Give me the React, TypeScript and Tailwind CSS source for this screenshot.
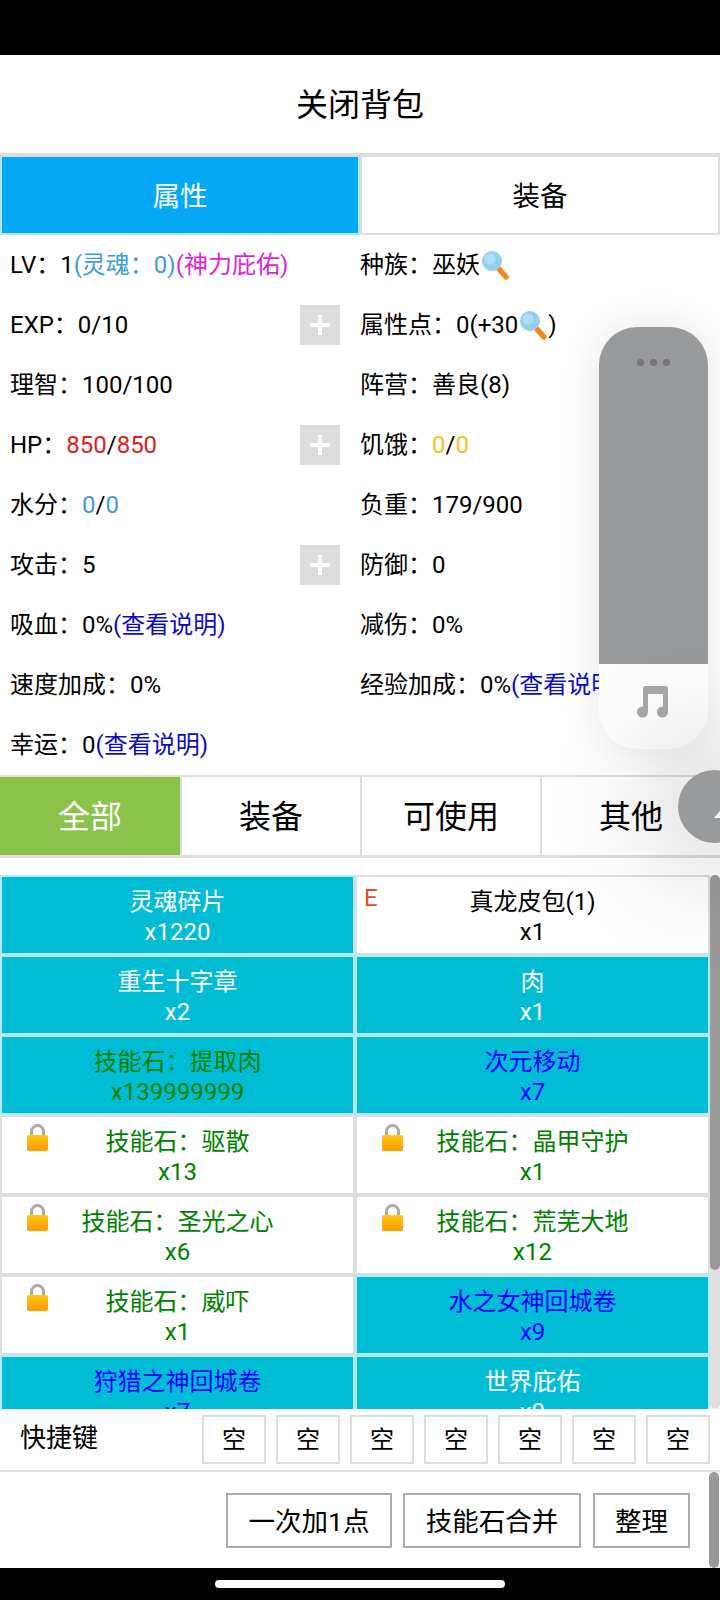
import React from 'react';

const Magnifier: React.FC = () => (
    <svg className="inline-block w-[30px] h-[30px] align-[-7px]" viewBox="0 0 30 30">
        <path d="M19 19l7 8" stroke="#f08a1d" strokeWidth="5.5" strokeLinecap="round" />
        <circle cx="12" cy="11" r="9.5" fill="#8fd0f5" stroke="#a9c6d8" strokeWidth="1" />
        <circle cx="10" cy="9" r="5.5" fill="#b0def9" />
    </svg>
);

const Lock: React.FC = () => (
    <svg className="absolute left-[25px] top-[7px] w-[21px] h-[28px]" viewBox="0 0 21 28">
        <defs>
            <linearGradient id="lockBody" x1="0" y1="0" x2="0" y2="1">
                <stop offset="0" stopColor="#ffc61a" />
                <stop offset="1" stopColor="#fb9b00" />
            </linearGradient>
        </defs>
        <path d="M4.5 13V7.5a6 6 0 0112 0V13" fill="none" stroke="#a9a9b2" strokeWidth="3" />
        <rect x="0" y="11" width="21" height="16" rx="2" fill="url(#lockBody)" />
    </svg>
);

const Plus: React.FC = () => (
    <div className="w-10 h-10 bg-[#dddddd] flex items-center justify-center">
        <svg className="w-5 h-5" viewBox="0 0 20 20">
            <path d="M10 0v20M0 10h20" stroke="#ffffff" strokeWidth="4" />
        </svg>
    </div>
);

// Beamed note from the floating widget
const MusicNote: React.FC = () => (
    <svg className="w-9 h-9" viewBox="0 0 36 36" fill="#a8a8a8">
        <path d="M7 4.5Q7 2 9.5 2H29.5Q32 2 32 4.5V28H27V10H12V28H7Z" />
        <circle cx="6.5" cy="28" r="5.5" />
        <circle cx="26.5" cy="28" r="5.5" />
    </svg>
);

interface StatRowProps {
    left: React.ReactNode;
    right: React.ReactNode;
    plus?: boolean;
}

const StatRow: React.FC<StatRowProps> = ({ left, right, plus }) => (
    <div className="flex h-[60px] items-center text-[24px] leading-[30px]">
        <div className="w-[360px] pl-[10px] pr-5 flex items-center justify-between whitespace-nowrap">
            <span>{left}</span>
            {plus && <Plus />}
        </div>
        <div className="whitespace-nowrap">{right}</div>
    </div>
);

interface ItemProps {
    name: string;
    count: string;
    filled?: boolean;
    color?: string;
    lock?: boolean;
    equip?: boolean;
}

const items: ItemProps[] = [
    { name: '灵魂碎片', count: 'x1220', filled: true, color: 'text-white' },
    { name: '真龙皮包(1)', count: 'x1', color: 'text-black', equip: true },
    { name: '重生十字章', count: 'x2', filled: true, color: 'text-white' },
    { name: '肉', count: 'x1', filled: true, color: 'text-white' },
    { name: '技能石：提取肉', count: 'x139999999', filled: true, color: 'text-[#008000]' },
    { name: '次元移动', count: 'x7', filled: true, color: 'text-[#0000ff]' },
    { name: '技能石：驱散', count: 'x13', color: 'text-[#008000]', lock: true },
    { name: '技能石：晶甲守护', count: 'x1', color: 'text-[#008000]', lock: true },
    { name: '技能石：圣光之心', count: 'x6', color: 'text-[#008000]', lock: true },
    { name: '技能石：荒芜大地', count: 'x12', color: 'text-[#008000]', lock: true },
    { name: '技能石：威吓', count: 'x1', color: 'text-[#008000]', lock: true },
    { name: '水之女神回城卷', count: 'x9', filled: true, color: 'text-[#0000ff]' },
    { name: '狩猎之神回城卷', count: 'x7', filled: true, color: 'text-[#0000ff]' },
    { name: '世界庇佑', count: 'x9', filled: true, color: 'text-white' },
];

const ItemCell: React.FC<ItemProps> = ({ name, count, filled, color, lock, equip }) => (
    <div
        className={`relative h-20 border-2 pt-1 flex flex-col items-center justify-center text-[24px] leading-[30px] ${
            filled ? 'bg-[#00bcd4] border-[#b2ebf2]' : 'bg-white border-[#dddddd]'
        } ${color}`}
    >
        {lock && <Lock />}
        {equip && <span className="absolute left-[7px] top-[6px] text-[#d9532c]">E</span>}
        <div>{name}</div>
        <div>{count}</div>
    </div>
);

const App: React.FC = () => {
    return (
        <div className="relative w-[720px] h-[1600px] overflow-hidden bg-white text-black font-['Roboto','Noto_Sans_CJK_SC',sans-serif]">
            <div className="h-[55px] bg-black" />
            <div className="h-[98px] pt-[2px] flex items-center justify-center text-[32px]">关闭背包</div>

            {/* Top tabs */}
            <div className="flex h-[82px] text-[27.5px]">
                <div className="w-[360px] pt-1 border-2 border-t-4 border-[#b3e5fc] border-t-[#dddddd] bg-[#03a9f4] text-white flex items-center justify-center">
                    属性
                </div>
                <div className="w-[360px] pt-1 border-2 border-t-4 border-[#dddddd] flex items-center justify-center">
                    装备
                </div>
            </div>

            {/* Stats */}
            <div className="h-[540px]">
                <StatRow
                    left={
                        <>
                            LV：1<span className="text-[#3f9bd6]">(灵魂：0)</span>
                            <span className="text-[#e01fd2]">(神力庇佑)</span>
                        </>
                    }
                    right={
                        <>
                            种族：巫妖
                            <Magnifier />
                        </>
                    }
                />
                <StatRow
                    plus
                    left="EXP：0/10"
                    right={
                        <>
                            属性点：0(+30
                            <Magnifier />)
                        </>
                    }
                />
                <StatRow left="理智：100/100" right="阵营：善良(8)" />
                <StatRow
                    plus
                    left={
                        <>
                            HP：<span className="text-[#d81e1e]">850</span>/<span className="text-[#d81e1e]">850</span>
                        </>
                    }
                    right={
                        <>
                            饥饿：<span className="text-[#f2c31f]">0</span>/<span className="text-[#f2c31f]">0</span>
                        </>
                    }
                />
                <StatRow
                    left={
                        <>
                            水分：<span className="text-[#3f9bd6]">0</span>/<span className="text-[#3f9bd6]">0</span>
                        </>
                    }
                    right="负重：179/900"
                />
                <StatRow plus left="攻击：5" right="防御：0" />
                <StatRow
                    left={
                        <>
                            吸血：0%<span className="text-[#0b0bc4]">(查看说明)</span>
                        </>
                    }
                    right="减伤：0%"
                />
                <StatRow
                    left="速度加成：0%"
                    right={
                        <>
                            经验加成：0%<span className="text-[#0b0bc4]">(查看说明)</span>
                        </>
                    }
                />
                <StatRow
                    left={
                        <>
                            幸运：0<span className="text-[#0b0bc4]">(查看说明)</span>
                        </>
                    }
                    right=""
                />
            </div>

            {/* Filter tabs */}
            <div className="grid grid-cols-4 h-[83px] border-t-2 border-b-[3px] border-[#dddddd] text-[32px]">
                <div className="bg-[#8bc34a] pt-[2px] text-white flex items-center justify-center">全部</div>
                <div className="border-l-2 pt-[2px] border-[#dddddd] flex items-center justify-center">装备</div>
                <div className="border-l-2 pt-[2px] border-[#dddddd] flex items-center justify-center">可使用</div>
                <div className="border-l-2 pt-[2px] border-[#dddddd] flex items-center justify-center">其他</div>
            </div>

            {/* Item list */}
            <div className="mt-[17px] h-[534px] overflow-hidden flex">
                <div className="w-[710px] grid grid-cols-2 content-start">
                    {items.map((item) => (
                        <ItemCell key={item.name} {...item} />
                    ))}
                </div>
                <div className="w-[10px] h-[534px] rounded-full bg-[#dfdfdf]">
                    <div className="h-[395px] rounded-full bg-[#9a9a9a]" />
                </div>
            </div>

            {/* Shortcut keys */}
            <div className="h-[63px] flex items-center border-b-2 border-[#dddddd]">
                <div className="w-[202px] pl-5 text-[26px] -mt-[2px]">快捷键</div>
                <div className="flex gap-[10px]">
                    {[0, 1, 2, 3, 4, 5, 6].map((i) => (
                        <div
                            key={i}
                            className="w-[64px] h-[49px] border-2 border-[#dddddd] flex items-center justify-center text-[24px]"
                        >
                            空
                        </div>
                    ))}
                </div>
            </div>

            {/* Action buttons */}
            <div className="h-[96px] flex">
                <div className="flex-1 flex items-center justify-end gap-[11px] pr-[19px] text-[26.5px]">
                    <div className="w-[166px] h-[55px] pt-1 border-2 border-[#aaaaaa] flex items-center justify-center">一次加1点</div>
                    <div className="w-[178px] h-[55px] pt-1 border-2 border-[#aaaaaa] flex items-center justify-center">技能石合并</div>
                    <div className="w-[97px] h-[55px] ml-px pt-1 border-2 border-[#aaaaaa] flex items-center justify-center">整理</div>
                </div>
                <div className="w-[10px] mr-px rounded-full bg-[#9a9a9a]" />
            </div>

            {/* Bottom system bar */}
            <div className="h-8 bg-black flex items-center justify-center">
                <div className="w-[290px] h-2 rounded-full bg-white" />
            </div>

            {/* Floating music widget */}
            <div className="absolute left-[599px] top-[327px] w-[109px] h-[422px] rounded-[38px] overflow-hidden bg-[#fdfdfd] shadow-[0_0_40px_rgba(0,0,0,0.1)] flex flex-col">
                <div className="h-[337px] bg-[#999a9c] flex justify-center gap-[6px] pt-[32px]">
                    <span className="w-[7px] h-[7px] rounded-full bg-[#767678]" />
                    <span className="w-[7px] h-[7px] rounded-full bg-[#767678]" />
                    <span className="w-[7px] h-[7px] rounded-full bg-[#767678]" />
                </div>
                <div className="flex-1 flex justify-center pt-[20px]">
                    <MusicNote />
                </div>
            </div>

            {/* Floating round button */}
            <div className="absolute left-[678px] top-[770px] w-[73px] h-[73px] rounded-full bg-[#999a9c] shadow-[0_0_110px_30px_rgba(0,0,0,0.17)]">
                <svg className="absolute left-[36px] top-[41px] w-[6px] h-[7px]" viewBox="0 0 6 7">
                    <path d="M0 7L6 0V7Z" fill="#ffffff" />
                </svg>
            </div>
        </div>
    );
};

export default App;
